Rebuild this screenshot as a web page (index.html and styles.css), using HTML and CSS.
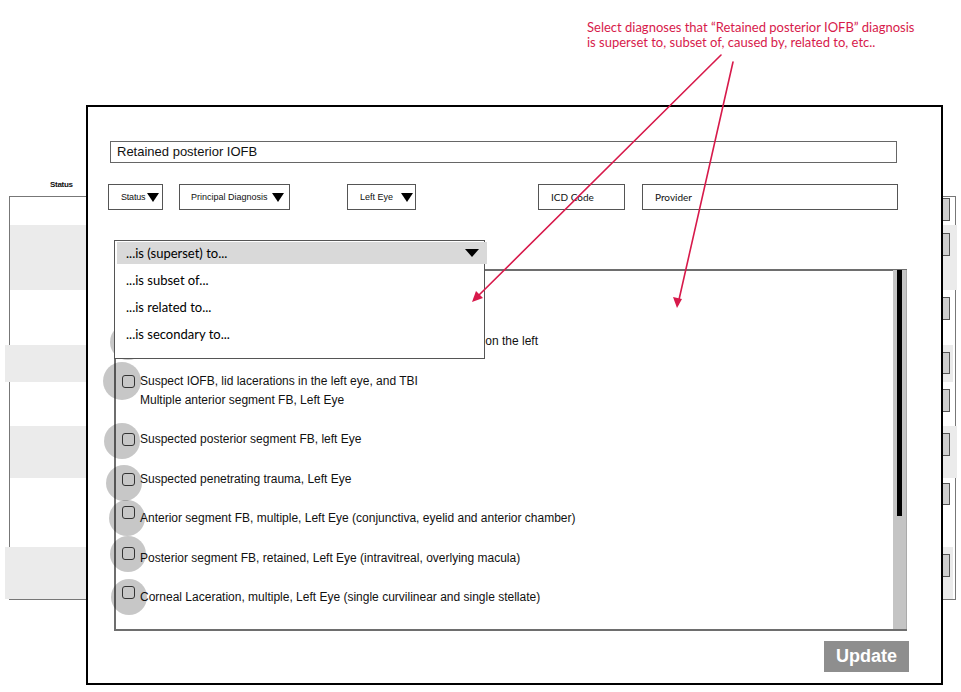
FILE: index.html
```html
<!DOCTYPE html>
<html>
<head>
<meta charset="utf-8">
<link rel="stylesheet" href="styles.css">
</head>
<body>
<div class="page">
  <div class="note">Select diagnoses that “Retained posterior IOFB” diagnosis<br>is superset to, subset of, caused by, related to, etc..</div>

  <div class="bg-window">
    <div class="bg-label">Status</div>
    <div class="band band-w1"></div>
    <div class="band band-s1 ext-r"></div>
    <div class="band band-w2"></div>
    <div class="band band-s2 ext-l"></div>
    <div class="band band-w3"></div>
    <div class="band band-s3 ext-r"></div>
    <div class="band band-w4"></div>
    <div class="band band-s4 ext-l"></div>
    <div class="bg-buttons">
      <div class="bgb b1"></div>
      <div class="bgb b2"></div>
      <div class="bgb b3"></div>
      <div class="bgb b4"></div>
      <div class="bgb b5"></div>
      <div class="bgb b6"></div>
      <div class="bgb b7"></div>
      <div class="bgb b8"></div>
    </div>
  </div>

  <div class="dialog">
    <div class="title-input">Retained posterior IOFB</div>
    <div class="filters">
      <div class="sel sel-status"><span>Status</span><i class="tri"></i></div>
      <div class="sel sel-principal"><span>Principal Diagnosis</span><i class="tri"></i></div>
      <div class="sel sel-eye"><span>Left Eye</span><i class="tri"></i></div>
      <div class="field field-icd">ICD Code</div>
      <div class="field field-provider">Provider</div>
    </div>

    <div class="list">
      <div class="list-body">
        <div class="item i1"><div class="touch"></div><div class="cb"></div><div class="txt">Retained posterior segment IOFB with scleral laceration and TBI on the left</div></div>
        <div class="item i2"><div class="touch big"></div><div class="cb"></div><div class="txt">Suspect IOFB, lid lacerations in the left eye, and TBI<br>Multiple anterior segment FB, Left Eye</div></div>
        <div class="item i3"><div class="touch"></div><div class="cb"></div><div class="txt">Suspected posterior segment FB, left Eye</div></div>
        <div class="item i4"><div class="touch"></div><div class="cb"></div><div class="txt">Suspected penetrating trauma, Left Eye</div></div>
        <div class="item i5"><div class="touch"></div><div class="cb raised"></div><div class="txt">Anterior segment FB, multiple, Left Eye (conjunctiva, eyelid and anterior chamber)</div></div>
        <div class="item i6"><div class="touch"></div><div class="cb raised2"></div><div class="txt">Posterior segment FB, retained, Left Eye (intravitreal, overlying macula)</div></div>
        <div class="item i7"><div class="touch"></div><div class="cb raised2"></div><div class="txt">Corneal Laceration, multiple, Left Eye (single curvilinear and single stellate)</div></div>
      </div>
      <div class="scrollbar"><div class="thumb"></div></div>
    </div>

    <div class="actions"><div class="update">Update</div></div>

    <div class="menu">
      <div class="menu-head"><span>...is (superset) to...</span><i class="tri tri-lg"></i></div>
      <div class="menu-opt">...is subset of...</div>
      <div class="menu-opt">...is related to...</div>
      <div class="menu-opt">...is secondary to...</div>
    </div>
  </div>

  <svg class="arrows" width="961" height="692" viewBox="0 0 961 692">
    <g stroke="#d71a4b" stroke-width="1.6" fill="none" stroke-linecap="round">
      <line x1="721" y1="55" x2="475" y2="299"/>
      <line x1="733" y1="62" x2="678" y2="304"/>
    </g>
    <g fill="#d71a4b">
      <polygon points="472,302 476,291 483,298"/>
      <polygon points="677,308 673,297 682,299"/>
    </g>
  </svg>
</div>
</body>
</html>
```
FILE: styles.css
```css
* { box-sizing: border-box; }
html, body { margin: 0; padding: 0; background: #fff; }
.page {
  position: relative;
  width: 961px;
  height: 692px;
  overflow: hidden;
  font-family: "Liberation Sans", Arial, sans-serif;
  color: #111;
}

/* annotation */
.note {
  position: absolute;
  left: 587px;
  top: 20px;
  font-family: Lato, "Open Sans", sans-serif;
  font-size: 13px;
  line-height: 15px;
  color: #d71a4b;
  white-space: nowrap;
}
.arrows { position: absolute; left: 0; top: 0; z-index: 10; pointer-events: none; }

/* background window */
.bg-window {
  position: absolute;
  left: 9px;
  top: 196px;
  width: 947px;
  height: 404px;
  border: 1px solid #777;
  background: #fff;
  display: flex;
  flex-direction: column;
}
.bg-label {
  position: absolute;
  left: 40px;
  top: -17px;
  font-size: 8px;
  font-weight: bold;
  letter-spacing: -0.3px;
}
.band { flex: none; }
.band-w1 { height: 28px; }
.band-s1 { height: 65px; background: #ebebeb; }
.band-w2 { height: 55px; }
.band-s2 { height: 37px; background: #ebebeb; }
.band-w3 { height: 44px; }
.band-s3 { height: 52px; background: #ebebeb; }
.band-w4 { height: 69px; }
.band-s4 { height: 52px; background: #ebebeb; }
.ext-r { margin-right: -2px; }
.ext-l { margin-left: -5px; margin-right: 2px; }
.bg-buttons {
  position: absolute;
  right: 5px;
  top: 1px;
  display: flex;
  flex-direction: column;
}
.bgb {
  width: 12px;
  height: 23px;
  background: #cfcfcf;
  border: 1px solid #555;
}
.b2 { margin-top: 12px; }
.b3 { margin-top: 41px; }
.b4 { margin-top: 32px; height: 22px; }
.b5 { margin-top: 15px; }
.b6 { margin-top: 21px; }
.b7 { margin-top: 27px; height: 22px; }
.b8 { margin-top: 49px; }

/* dialog */
.dialog {
  position: absolute;
  left: 86px;
  top: 105px;
  width: 857px;
  height: 580px;
  border: 2px solid #000;
  background: #fff;
  z-index: 2;
  display: flex;
  flex-direction: column;
  padding-top: 34px;
}
.title-input {
  margin-left: 22px;
  width: 787px;
  height: 22px;
  border: 1px solid #666;
  font-size: 13px;
  line-height: 20px;
  padding-left: 6px;
}
.filters {
  margin-top: 21px;
  margin-left: 20px;
  display: flex;
  height: 26px;
}
.sel, .field {
  height: 26px;
  border: 1px solid #555;
  display: flex;
  align-items: center;
  font-size: 9px;
}
.sel span { white-space: nowrap; }
.tri {
  display: block;
  width: 0;
  height: 0;
  border-left: 6.5px solid transparent;
  border-right: 6.5px solid transparent;
  border-top: 9px solid #000;
}
.sel-status { width: 55px; padding-left: 12px; }
.sel-status span { letter-spacing: -0.2px; }
.sel-status .tri { margin-left: 2px; }
.sel-principal { width: 111px; margin-left: 16px; padding-left: 11px; }
.sel-principal .tri { margin-left: 4px; }
.sel-eye { width: 69px; margin-left: 57px; padding-left: 12px; }
.sel-eye .tri { margin-left: 8px; }
.field {
  font-family: Lato, "Open Sans", sans-serif;
  font-size: 10px;
}
.field-icd { width: 87px; margin-left: 122px; padding-left: 12px; }
.field-provider { width: 256px; margin-left: 17px; padding-left: 12px; }

/* list */
.list {
  margin-top: 59px;
  margin-left: 26px;
  width: 793px;
  height: 362px;
  border: 2px solid #6e6e6e;
  border-right: none;
  display: flex;
}
.list-body {
  flex: 1;
  padding-top: 61px;
  display: flex;
  flex-direction: column;
  gap: 20.5px;
}
.scrollbar {
  width: 14px;
  margin-top: -1px;
  background: #c4c4c4;
  border-right: 1px solid #aaa;
  position: relative;
}
.thumb {
  margin-left: 4px;
  width: 5px;
  height: 246px;
  background: #000;
}
.item {
  position: relative;
  display: flex;
  align-items: flex-start;
  font-size: 12px;
  line-height: 19px;
}
.touch {
  position: absolute;
  width: 36px;
  height: 36px;
  border-radius: 50%;
  background: rgba(0, 0, 0, 0.22);
  z-index: 3;
}
.touch.big { width: 38px; height: 38px; }
.i1 .touch { left: -6px; top: -8px; }
.i2 .touch { left: -13px; top: -10px; }
.i3 .touch { left: -12px; top: -7px; }
.i4 .touch { left: -10px; top: -5px; }
.i5 .touch { left: -7px; top: -9px; }
.i6 .touch { left: -6px; top: -13px; }
.i7 .touch { left: -5px; top: -9px; }
.cb {
  flex: none;
  width: 13px;
  height: 13px;
  margin-left: 6px;
  margin-top: 3px;
  border: 1.5px solid #333;
  border-radius: 3px;
  background: transparent;
  position: relative;
  z-index: 4;
}
.cb.raised { margin-top: -3px; }
.cb.raised2 { margin-top: -2px; }
.txt {
  margin-left: 5px;
  white-space: nowrap;
  position: relative;
  z-index: 4;
}

/* update */
.actions {
  display: flex;
  justify-content: flex-end;
  margin-top: 10px;
  padding-right: 32px;
}
.update {
  width: 85px;
  height: 31px;
  background: #8e8e8e;
  color: #fff;
  font-weight: bold;
  font-size: 18px;
  display: flex;
  align-items: center;
  justify-content: center;
}

/* dropdown menu */
.menu {
  position: absolute;
  left: 26px;
  top: 133px;
  width: 371px;
  height: 119px;
  border: 1px solid #555;
  background: #fff;
  padding: 1px 0 0 2px;
  z-index: 6;
  font-family: Lato, "Open Sans", sans-serif;
  font-size: 13px;
  color: #000;
}
.menu-head {
  height: 22px;
  background: #d9d9d9;
  display: flex;
  align-items: center;
  justify-content: space-between;
  padding: 0 8px 0 9px;
  margin-right: -3px;
}
.tri-lg {
  border-left-width: 7px;
  border-right-width: 7px;
  border-top-width: 8px;
}
.menu-opt {
  height: 27px;
  line-height: 27px;
  padding-left: 9px;
}
.menu-head + .menu-opt { margin-top: 3px; }
```
